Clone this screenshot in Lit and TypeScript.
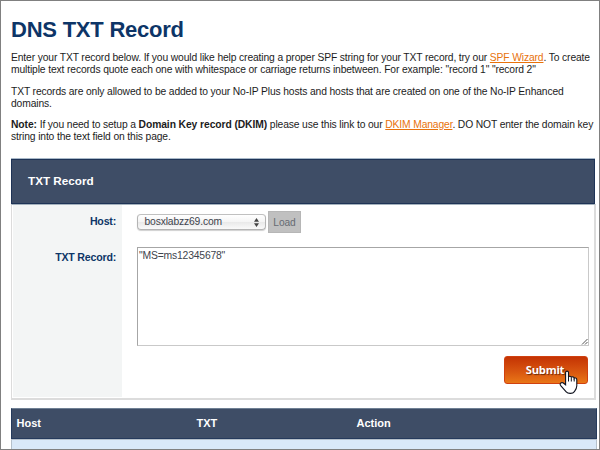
import { LitElement, html, css } from "lit";
import { customElement } from "lit/decorators.js";

@customElement("submit-button")
class SubmitButton extends LitElement {
  static styles = css`
    :host { display: block; position: relative; width: 84px; height: 28px; }
    .button {
      display: block; box-sizing: border-box; width: 84px; height: 28px; padding: 0 2px 0 0;
      border: 1px solid #d0400f; border-radius: 3px;
      background: linear-gradient(#c43303, #d85510 55%, #e97717);
      color: #fff; font: 700 11.2px/26px "Open Sans", sans-serif; letter-spacing: -0.25px;
      text-shadow: 1px 1px 1px #6b2a08; text-align: center;
    }
    .cursor { position: absolute; left: 55px; top: 14px; width: 20px; height: 24px; }
  `;
  render() {
    return html`
      <button class="button">Submit</button>
      <svg class="cursor" viewBox="0 0 20 24">
        <path d="M6.6 14.8V2.6C6.6.6 9.5.6 9.5 2.6V7C9.8 5.8 12.2 6 12.3 7.5C12.8 6.3 15.1 6.7 15.2 8.3C15.7 7.4 17.8 7.8 17.8 9.7V15.8C17.8 18.5 16.7 20 15.4 21.6C13.8 23.9 9 24 7.2 21.8L1.5 15.3C.5 13.7 2.1 12 4 12.8Z" fill="#fff" stroke="#10131f" stroke-width="1.1"/>
        <path d="M9.5 7V11.5M12.3 7.5V11.5M15.2 8.3V11.5" fill="none" stroke="#10131f"/>
      </svg>`;
  }
}

@customElement("host-select")
class HostSelect extends LitElement {
  static styles = css`
    :host {
      display: flex; align-items: center; justify-content: space-between; box-sizing: border-box;
      width: 129px; height: 16px; padding: 0 6px 0 6.5px;
      border: 1px solid #b4b4b4; border-top-color: #c0c0c0; border-radius: 4px;
      background: linear-gradient(#fff, #f4f4f4 50%, #e9e9e9 52%, #fafafa);
      box-shadow: 0 1px 1px #d0d0d0;
      font: 10.3px/14px "Liberation Sans", sans-serif; letter-spacing: -0.14px; color: #3e444d;
    }
    .arrows { width: 5px; height: 9px; }
  `;
  render() {
    return html`<span>bosxlabzz69.com</span>
      <svg class="arrows" viewBox="0 0 5 9"><path d="M0 3.7 2.5 0 5 3.7ZM0 5.3H5L2.5 9Z" fill="#444"/></svg>`;
  }
}

@customElement("app-root")
class AppRoot extends LitElement {
  static styles = css`
    :host {
      display: block; box-sizing: border-box; width: 600px; height: 450px; overflow: hidden;
      border: 1px solid #808080; padding: 17px 3px 0 10px; background: #fff;
      font: 10.3px/12px "Liberation Sans", Arial, sans-serif; letter-spacing: -0.13px; color: #1c1c1c;
    }
    h1 { margin: 0; font-size: 22px; line-height: 24px; letter-spacing: -0.23px; color: #0d3567; }
    .intro { height: 108px; padding-top: 10px; box-sizing: border-box; margin-bottom: 9px; }
    p { margin: 0 0 9.5px; }
    .line { display: block; white-space: nowrap; }
    a { color: #e8720c; text-decoration: underline; }
    b { letter-spacing: -0.08px; }
    .title {
      box-sizing: border-box; width: 584px; height: 45px; padding-left: 16px;
      border: 1px solid #1e3356; background: #3e4d66; letter-spacing: 0;
      box-shadow: 0 -1px #a9b9c9; color: #fff; font-weight: 700; font-size: 11.7px; line-height: 42px;
    }
    .panel {
      box-sizing: border-box; width: 585px; height: 196px; display: grid;
      grid-template-columns: 110px 1fr; border: solid #dcdcdc; border-top-color: #a5b2bd;
      border-width: 1px 2px 2px 1px;
    }
    .labels {
      margin: 0 0 1px 1px; background: #f3f5f5; padding: 10px 6px 0 0; text-align: right;
      font-weight: 700; color: #0d3567; font-size: 10.6px; letter-spacing: -0.2px;
    }
    .label { height: 36px; }
    .fields { padding: 6px 6px 0 15px; }
    .host { display: flex; align-items: center; gap: 2px; height: 22px; }
    .load {
      box-sizing: border-box; width: 33px; height: 22px; padding: 0; border: 1px solid #b6b6b6;
      background: #c0c0c0; color: #666b73; font: 10.2px "Liberation Sans", sans-serif; letter-spacing: -0.1px;
    }
    .text {
      position: relative; box-sizing: border-box; width: 452px; height: 99px; margin-top: 14px; padding: 2px 1px;
      border: 1px solid #c9c9c9; border-top-color: #a6a6a6; border-left-color: #a6a6a6;
      font-size: 10.4px; letter-spacing: -0.2px; color: #3e444d;
    }
    .grip { position: absolute; right: 0; bottom: 0; width: 7px; height: 7px; }
    .actions { display: flex; justify-content: flex-end; margin: 10px 1px 0 0; }
    .records {
      margin-top: 8px; box-sizing: border-box; width: 586px; height: 31px; display: grid;
      grid-template-columns: 180px 160px 1fr; padding: 0 0 2px 4.5px; align-items: center;
      border: 1px solid #253a5c; border-top-color: #6f8094; background: #3e4d66;
      color: #fff; font-weight: 700; font-size: 11px; letter-spacing: 0;
    }
    .row { box-sizing: border-box; width: 586px; height: 12px; border: 1px solid #b5c0cb; border-bottom: 0; background: #d9e8f8; }
  `;
  render() {
    return html`
      <h1>DNS TXT Record</h1>
      <section class="intro">
        <p><span class="line">Enter your TXT record below. If you would like help creating a proper SPF string for your TXT record, try our <a>SPF Wizard</a>. To create</span>
          <span class="line">multiple text records quote each one with whitespace or carriage returns inbetween. For example: "record 1" "record 2"</span></p>
        <p><span class="line">TXT records are only allowed to be added to your No-IP Plus hosts and hosts that are created on one of the No-IP Enhanced</span>
          <span class="line">domains.</span></p>
        <p><span class="line"><b>Note:</b> If you need to setup a <b>Domain Key record (DKIM)</b> please use this link to our <a>DKIM Manager</a>. DO NOT enter the domain key</span>
          <span class="line">string into the text field on this page.</span></p>
      </section>
      <div class="title">TXT Record</div>
      <section class="panel">
        <div class="labels"><div class="label">Host:</div><div class="label">TXT Record:</div></div>
        <div class="fields">
          <div class="host"><host-select></host-select><button class="load">Load</button></div>
          <div class="text">"MS=ms12345678"
            <svg class="grip" viewBox="0 0 7 7"><path d="M1 6.5 6.5 1M4 6.5 6.5 4" fill="none" stroke="#555"/></svg>
          </div>
          <div class="actions"><submit-button></submit-button></div>
        </div>
      </section>
      <div class="records"><span>Host</span><span>TXT</span><span>Action</span></div>
      <div class="row"></div>`;
  }
}
